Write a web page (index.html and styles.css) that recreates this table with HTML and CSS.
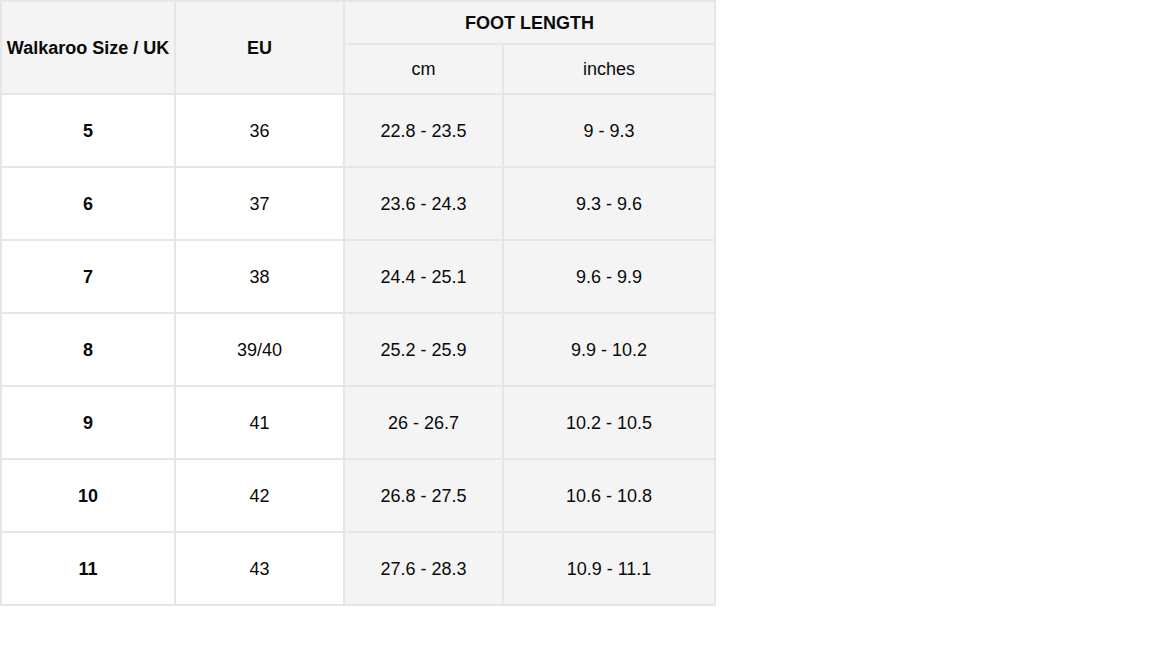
FILE: index.html
```html
<!DOCTYPE html>
<html>
<head>
<meta charset="utf-8">
<link rel="stylesheet" href="styles.css">
</head>
<body>
<table class="size-chart">
  <colgroup>
    <col class="c-uk">
    <col class="c-eu">
    <col class="c-cm">
    <col class="c-in">
  </colgroup>
  <thead>
    <tr class="head-top">
      <th rowspan="2" class="shade">Walkaroo Size / UK</th>
      <th rowspan="2" class="shade">EU</th>
      <th colspan="2" class="shade">FOOT LENGTH</th>
    </tr>
    <tr class="head-sub">
      <td class="shade">cm</td>
      <td class="shade">inches</td>
    </tr>
  </thead>
  <tbody>
    <tr><td class="uk">5</td><td>36</td><td class="shade">22.8 - 23.5</td><td class="shade">9 - 9.3</td></tr>
    <tr><td class="uk">6</td><td>37</td><td class="shade">23.6 - 24.3</td><td class="shade">9.3 - 9.6</td></tr>
    <tr><td class="uk">7</td><td>38</td><td class="shade">24.4 - 25.1</td><td class="shade">9.6 - 9.9</td></tr>
    <tr><td class="uk">8</td><td>39/40</td><td class="shade">25.2 - 25.9</td><td class="shade">9.9 - 10.2</td></tr>
    <tr><td class="uk">9</td><td>41</td><td class="shade">26 - 26.7</td><td class="shade">10.2 - 10.5</td></tr>
    <tr><td class="uk">10</td><td>42</td><td class="shade">26.8 - 27.5</td><td class="shade">10.6 - 10.8</td></tr>
    <tr><td class="uk">11</td><td>43</td><td class="shade">27.6 - 28.3</td><td class="shade">10.9 - 11.1</td></tr>
  </tbody>
</table>
</body>
</html>
```

FILE: styles.css
```css
html, body {
  margin: 0;
  padding: 0;
  background: #ffffff;
}

body {
  font-family: "Liberation Sans", Arial, sans-serif;
  font-size: 18px;
  color: #0a0a0a;
}

.size-chart {
  border-collapse: collapse;
  width: 714px;
  table-layout: fixed;
}

.c-uk { width: 174px; }
.c-eu { width: 169px; }
.c-cm { width: 159px; }
.c-in { width: 212px; }

.size-chart th,
.size-chart td {
  border: 2px solid #e6e6e6;
  text-align: center;
  vertical-align: middle;
  padding: 0;
  line-height: 20px;
  background: #ffffff;
}

.size-chart th {
  font-weight: bold;
}

.size-chart .shade {
  background: #f4f4f4;
}

.head-top th {
  height: 41px;
}

.head-sub td {
  height: 48px;
}

.size-chart tbody td {
  height: 71px;
}

.size-chart td.uk {
  font-weight: bold;
}
```
